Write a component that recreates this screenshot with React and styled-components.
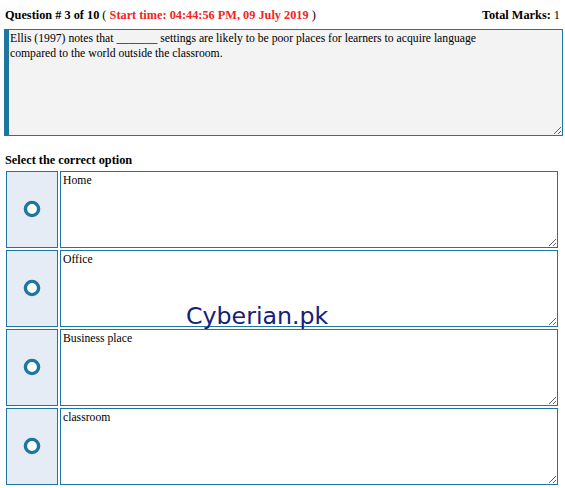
import React from 'react'
import styled, { createGlobalStyle } from 'styled-components'

const Global = createGlobalStyle`
  html, body { margin: 0; padding: 0; background: #fff; }
  body { font-family: "Liberation Serif", "Times New Roman", serif; font-size: 13px; color: #000; }
`

const BLUE = '#1d76a0'

const Page = styled.div`
  position: relative;
  width: 565px;
  padding: 8px 3px 0 4px;
  box-sizing: border-box;
`

const Header = styled.div`
  display: flex;
  justify-content: space-between;
  align-items: baseline;
  padding: 0 2px 0 1px;
  font-size: 12.3px;
  line-height: 15px;
  font-weight: bold;
`

const Red = styled.span`
  color: #f52222;
`

const Plain = styled.span`
  font-weight: normal;
`

const QuestionBox = styled.textarea`
  display: block;
  box-sizing: border-box;
  width: 559px;
  height: 107px;
  margin-top: 6px;
  padding: 1px 2px 0 1px;
  border: 1px solid ${BLUE};
  border-left: 5px solid ${BLUE};
  background: #f3f3f3;
  font-family: inherit;
  font-size: 11.7px;
  line-height: 15px;
  color: #000;
  outline: none;
`

const Label = styled.div`
  margin: 17px 0 0 1px;
  font-size: 12.3px;
  font-weight: bold;
  line-height: 15px;
`

const Options = styled.div`
  display: flex;
  flex-direction: column;
  gap: 2px;
  margin: 3px 0 0 2px;
`

const Row = styled.div`
  display: flex;
  gap: 2px;
  height: 77px;
`

const RadioCell = styled.div`
  box-sizing: border-box;
  width: 52px;
  flex: none;
  display: flex;
  align-items: center;
  justify-content: center;
  padding-bottom: 2px;
  background: #e6ecf6;
  border: 1px solid ${BLUE};
`

const AnswerBox = styled.textarea`
  box-sizing: border-box;
  width: 498px;
  height: 77px;
  margin: 0;
  padding: 1px 2px 0 2px;
  border: 1px solid ${BLUE};
  background: #fff;
  font-family: inherit;
  font-size: 11.7px;
  line-height: 15px;
  color: #000;
  outline: none;
`

const Watermark = styled.div`
  position: absolute;
  left: 186px;
  top: 302px;
  font-family: "DejaVu Sans", Verdana, sans-serif;
  font-size: 23.7px;
  color: #16207a;
  pointer-events: none;
`

const Ring = () => (
  <svg width="18" height="18" viewBox="0 0 18 18">
    <circle cx="9" cy="9" r="6.6" fill="#fff" stroke={BLUE} strokeWidth="3.4" />
  </svg>
)

const question =
  'Ellis (1997) notes that _______ settings are likely to be poor places for learners to acquire language\ncompared to the world outside the classroom.'

const options = ['Home', 'Office', 'Business place', 'classroom']

export default function App() {
  return (
    <Page>
      <Global />
      <Header>
        <span>
          Question # 3 of 10 <Plain>(</Plain> <Red>Start time: 04:44:56 PM, 09 July 2019</Red> <Plain>)</Plain>
        </span>
        <span>
          Total Marks: <Plain>1</Plain>
        </span>
      </Header>
      <QuestionBox readOnly defaultValue={question} />
      <Label>Select the correct option</Label>
      <Options>
        {options.map(opt => (
          <Row key={opt}>
            <RadioCell>
              <Ring />
            </RadioCell>
            <AnswerBox readOnly defaultValue={opt} />
          </Row>
        ))}
      </Options>
      <Watermark>Cyberian.pk</Watermark>
    </Page>
  )
}
